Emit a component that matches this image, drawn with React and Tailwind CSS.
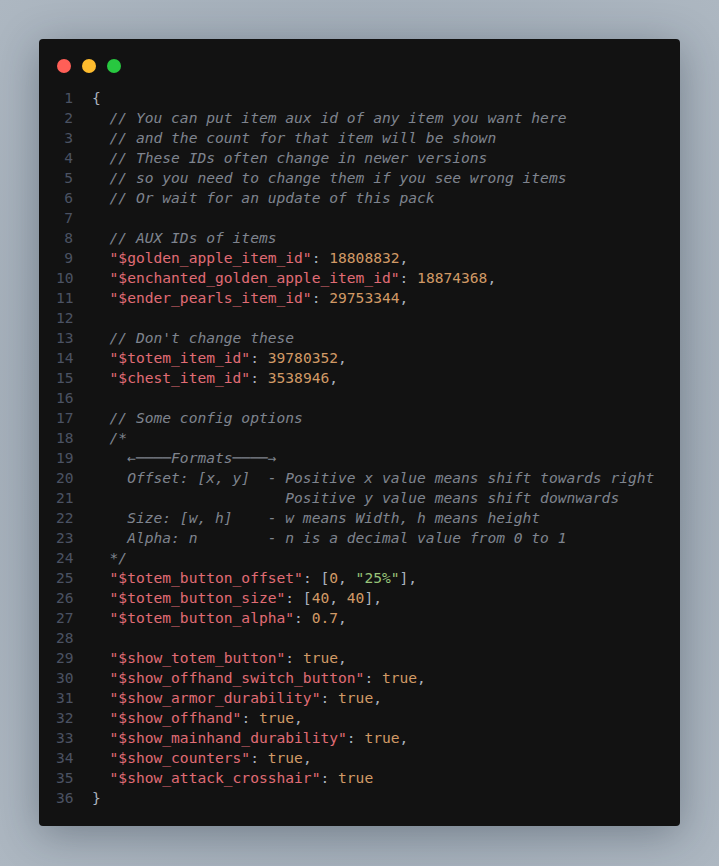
const C = {
  c: 'text-[#7f848e] italic',
  k: 'text-[#e06c75]',
  n: 'text-[#d19a66]',
  g: 'text-[#98c379]',
  p: 'text-[#abb2bf]',
};

const kv = (key, value, comma = true) => [
  ['k', `  "${key}"`],
  ['p', ': '],
  ['n', value],
  ...(comma ? [['p', ',']] : []),
];

const LINES = [
  [['p', '{']],
  [['c', '  // You can put item aux id of any item you want here']],
  [['c', '  // and the count for that item will be shown']],
  [['c', '  // These IDs often change in newer versions']],
  [['c', '  // so you need to change them if you see wrong items']],
  [['c', '  // Or wait for an update of this pack']],
  [],
  [['c', '  // AUX IDs of items']],
  kv('$golden_apple_item_id', '18808832'),
  kv('$enchanted_golden_apple_item_id', '18874368'),
  kv('$ender_pearls_item_id', '29753344'),
  [],
  [['c', "  // Don't change these"]],
  kv('$totem_item_id', '39780352'),
  kv('$chest_item_id', '3538946'),
  [],
  [['c', '  // Some config options']],
  [['c', '  /*']],
  [['c', '    ←────Formats────→']],
  [['c', '    Offset: [x, y]  - Positive x value means shift towards right']],
  [['c', '                      Positive y value means shift downwards']],
  [['c', '    Size: [w, h]    - w means Width, h means height']],
  [['c', '    Alpha: n        - n is a decimal value from 0 to 1']],
  [['c', '  */']],
  [
    ['k', '  "$totem_button_offset"'],
    ['p', ': ['],
    ['n', '0'],
    ['p', ', '],
    ['g', '"25%"'],
    ['p', '],'],
  ],
  [
    ['k', '  "$totem_button_size"'],
    ['p', ': ['],
    ['n', '40'],
    ['p', ', '],
    ['n', '40'],
    ['p', '],'],
  ],
  kv('$totem_button_alpha', '0.7'),
  [],
  kv('$show_totem_button', 'true'),
  kv('$show_offhand_switch_button', 'true'),
  kv('$show_armor_durability', 'true'),
  kv('$show_offhand', 'true'),
  kv('$show_mainhand_durability', 'true'),
  kv('$show_counters', 'true'),
  kv('$show_attack_crosshair', 'true', false),
  [['p', '}']],
];

export default function App() {
  return (
    <div className="min-h-[866px] w-full bg-[radial-gradient(ellipse_at_center,#8f9aa5_0%,#a2adb8_60%,#adb7c1_100%)] p-[39px]">
      <div className="rounded-[4px] bg-[#121212] pt-[20px] pb-[18px] pl-[18px] pr-[16px] shadow-[0_8px_40px_rgba(30,40,55,0.35)]">
        <div className="flex gap-[11px]">
          <span className="h-[14px] w-[14px] rounded-full bg-[#ff5f57]" />
          <span className="h-[14px] w-[14px] rounded-full bg-[#febc2e]" />
          <span className="h-[14px] w-[14px] rounded-full bg-[#28c840]" />
        </div>
        <div className="mt-[15px] font-['DejaVu_Sans_Mono',monospace] text-[14.6px] leading-5 whitespace-pre">
          {LINES.map((tokens, i) => (
            <div key={i} className="flex h-5">
              <span className="w-[17px] -ml-[1px] text-right text-[#4b5263]">{i + 1}</span>
              <span className="ml-[19px]">
                {tokens.map(([t, text], j) => (
                  <span key={j} className={C[t]}>
                    {text}
                  </span>
                ))}
              </span>
            </div>
          ))}
        </div>
      </div>
    </div>
  );
}
